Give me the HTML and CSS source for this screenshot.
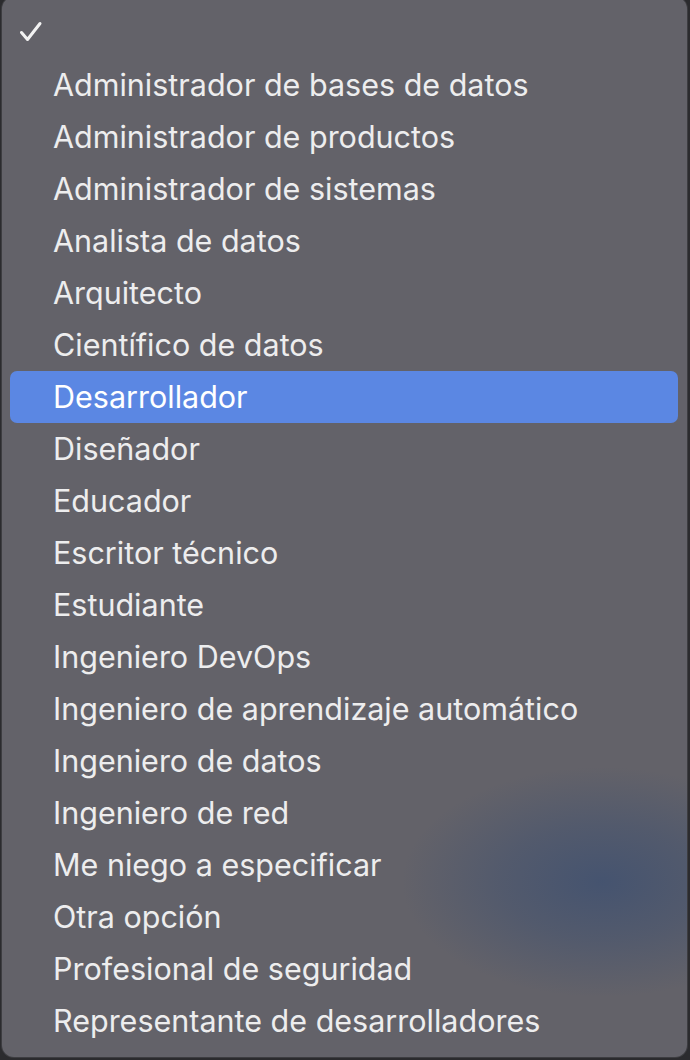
FILE: index.html
```html
<!DOCTYPE html>
<html lang="es">
<head>
<meta charset="utf-8">
<link rel="stylesheet" href="styles.css">
</head>
<body>
<div class="menu">
  <div class="glow"></div>
  <ul class="list">
    <li class="item checked"><svg class="check" viewBox="0 0 24 22" width="24" height="22"><path d="M2.5 11.5 L8.5 18.5 L21 2.5" fill="none" stroke="#f2f2f2" stroke-width="3" stroke-linecap="round" stroke-linejoin="round"/></svg></li>
    <li class="item">Administrador de bases de datos</li>
    <li class="item">Administrador de productos</li>
    <li class="item">Administrador de sistemas</li>
    <li class="item">Analista de datos</li>
    <li class="item">Arquitecto</li>
    <li class="item">Científico de datos</li>
    <li class="item active">Desarrollador</li>
    <li class="item">Diseñador</li>
    <li class="item">Educador</li>
    <li class="item">Escritor técnico</li>
    <li class="item">Estudiante</li>
    <li class="item">Ingeniero DevOps</li>
    <li class="item">Ingeniero de aprendizaje automático</li>
    <li class="item">Ingeniero de datos</li>
    <li class="item">Ingeniero de red</li>
    <li class="item">Me niego a especificar</li>
    <li class="item">Otra opción</li>
    <li class="item">Profesional de seguridad</li>
    <li class="item">Representante de desarrolladores</li>
  </ul>
</div>
</body>
</html>
```

FILE: styles.css
```css
html, body {
  margin: 0;
  padding: 0;
  background: #2b2b2e;
  height: 1060px;
  overflow: hidden;
}
.menu {
  position: relative;
  margin: -3px 0 0 2px;
  width: 685px;
  height: 1060px;
  box-sizing: border-box;
  border-radius: 12px;
  background: #636269;
  box-shadow: 0 0 0 1px #3d3d41;
  overflow: hidden;
}
.glow {
  position: absolute;
  left: 400px;
  top: 770px;
  width: 400px;
  height: 230px;
  border-radius: 50%;
  background: radial-gradient(closest-side, rgba(66,82,112,0.9), rgba(66,82,112,0.5) 50%, rgba(66,82,112,0) 100%);
}
.list {
  position: relative;
  list-style: none;
  margin: 0;
  padding: 10px 9px 0 8px;
}
.item {
  height: 52px;
  box-sizing: border-box;
  display: flex;
  align-items: center;
  padding-left: 43px;
  padding-bottom: 2px;
  font-family: Inter, "Noto Sans", sans-serif;
  font-size: 30.5px;
  color: #ededee;
  border-radius: 7px;
  letter-spacing: 0;
}
.item.checked {
  padding-left: 9px;
}
.item.active {
  background: #5b87e3;
  color: #ffffff;
}
.check {
  display: block;
}
```
